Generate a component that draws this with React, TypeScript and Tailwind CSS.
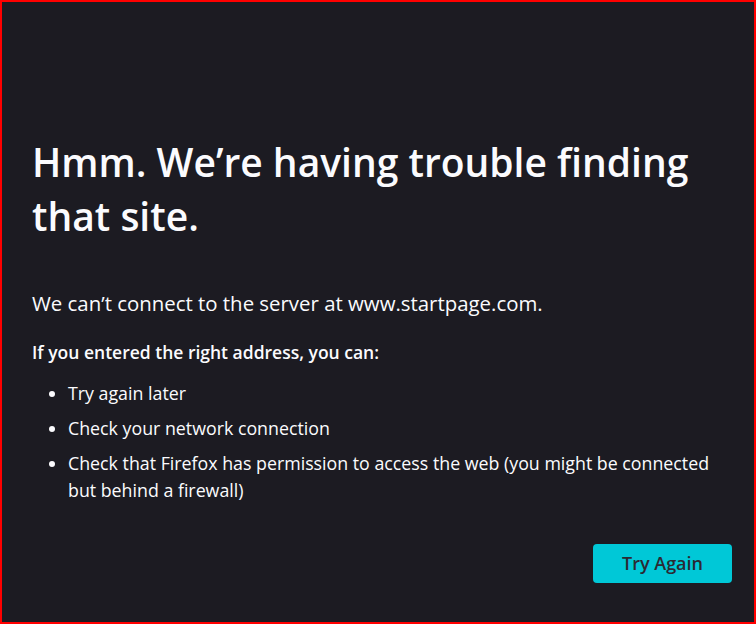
export default function App() {
  const font = { fontFamily: '"Open Sans", "Noto Sans", sans-serif' };
  return (
    <div
      className="h-screen w-full border-2 border-[#ff0000] bg-[#1c1b22] text-[#fbfbfe] pl-[30px] pr-[22px] pt-[133px]"
      style={font}
    >
      <div className="max-w-[700px]">
        {/* Title */}
        <h1 className="text-[39px] leading-[54px] font-semibold">
          Hmm. We’re having trouble finding that site.
        </h1>

        {/* Description */}
        <p className="mt-[46px] text-[20.4px] leading-[28px]">
          We can’t connect to the server at www.startpage.com.
        </p>

        <p className="mt-[22px] text-[17.5px] leading-[26px] font-semibold">
          If you entered the right address, you can:
        </p>

        <ul className="mt-[15px] pl-[36px] pr-[20px] list-disc text-[17.8px] leading-[27px] space-y-[8px]">
          <li>Try again later</li>
          <li>Check your network connection</li>
          <li>
            Check that Firefox has permission to access the web (you might be connected but behind a firewall)
          </li>
        </ul>

        {/* Button */}
        <div className="mt-[40px] flex justify-end">
          <button className="h-[39px] w-[139px] rounded-[4px] bg-[#00c8d7] text-[#2b2a33] text-[18px] font-semibold">
            Try Again
          </button>
        </div>
      </div>
    </div>
  );
}
